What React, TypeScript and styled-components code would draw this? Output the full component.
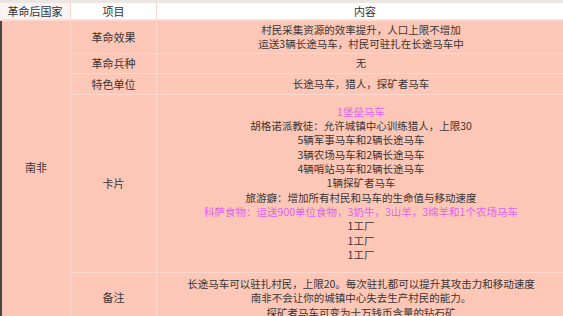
import styled, { createGlobalStyle } from "styled-components";

const GlobalStyle = createGlobalStyle`
  html, body {
    margin: 0;
    padding: 0;
    overflow: hidden;
    background: #fcc7b6;
  }
  body {
    font-family: "Noto Sans CJK SC", "Noto Sans", sans-serif;
  }
`;

const Page = styled.div`
  width: 563px;
  height: 316px;
  overflow: hidden;
  background: #fcc7b6;
`;

const TopStrip = styled.div`
  height: 3px;
  background: #ece6e3;
`;

const Table = styled.div`
  display: grid;
  grid-template-columns: 70px 85px 416px;
  grid-template-rows: 17px 32px 19px 20px 177px 48px;
  gap: 1px;
  width: 573px;
  background: #fcd9cc;
  font-size: 10.5px;
  line-height: 14.3px;
  color: #3b3535;
`;

const HeadCell = styled.div<{ $first?: boolean }>`
  display: flex;
  align-items: center;
  justify-content: center;
  background: ${(p) => (p.$first ? "#f7f4f3" : "#ffffff")};
  color: #333;
  font-size: 11px;
  border-bottom: 1px solid #f0e6e2;
`;

const Country = styled.div`
  grid-row: 2 / span 5;
  display: flex;
  align-items: center;
  justify-content: center;
  background: #fcc7b6;
  border-left: 2px solid #4a4444;
  font-size: 11px;
  padding-bottom: 8px;
`;

const Label = styled.div`
  display: flex;
  align-items: center;
  justify-content: center;
  background: #fcc7b6;
  font-size: 11px;
`;

const Content = styled.div`
  display: flex;
  flex-direction: column;
  align-items: center;
  justify-content: center;
  background: #fcc7b6;
  text-align: center;
  padding-right: 8px;
`;

const NoteContent = styled(Content)`
  justify-content: flex-start;
  padding-top: 4px;
`;

const Line = styled.div<{ $accent?: boolean }>`
  white-space: nowrap;
  color: ${(p) => (p.$accent ? "#dc63ee" : "inherit")};
`;

const cardLines: { text: string; accent?: boolean }[] = [
  { text: "1堡垒马车", accent: true },
  { text: "胡格诺派教徒：允许城镇中心训练猎人，上限30" },
  { text: "5辆军事马车和2辆长途马车" },
  { text: "3辆农场马车和2辆长途马车" },
  { text: "4辆哨站马车和2辆长途马车" },
  { text: "1辆探矿者马车" },
  { text: "旅游癖：增加所有村民和马车的生命值与移动速度" },
  { text: "科萨食物：运送900单位食物，3奶牛，3山羊，3绵羊和1个农场马车", accent: true },
  { text: "1工厂" },
  { text: "1工厂" },
  { text: "1工厂" },
];

export default function App() {
  return (
    <Page>
      <GlobalStyle />
      <TopStrip />
      <Table>
        <HeadCell $first>革命后国家</HeadCell>
        <HeadCell>项目</HeadCell>
        <HeadCell>内容</HeadCell>

        <Country>南非</Country>

        <Label>革命效果</Label>
        <Content>
          <Line>村民采集资源的效率提升，人口上限不增加</Line>
          <Line>运送3辆长途马车，村民可驻扎在长途马车中</Line>
        </Content>

        <Label>革命兵种</Label>
        <Content>
          <Line>无</Line>
        </Content>

        <Label>特色单位</Label>
        <Content>
          <Line>长途马车，猎人，探矿者马车</Line>
        </Content>

        <Label>卡片</Label>
        <Content>
          {cardLines.map((l, i) => (
            <Line key={i} $accent={l.accent}>
              {l.text}
            </Line>
          ))}
        </Content>

        <Label>备注</Label>
        <NoteContent>
          <Line>长途马车可以驻扎村民，上限20。每次驻扎都可以提升其攻击力和移动速度</Line>
          <Line>南非不会让你的城镇中心失去生产村民的能力。</Line>
          <Line>探矿者马车可变为十万钱币含量的钻石矿</Line>
        </NoteContent>
      </Table>
    </Page>
  );
}
